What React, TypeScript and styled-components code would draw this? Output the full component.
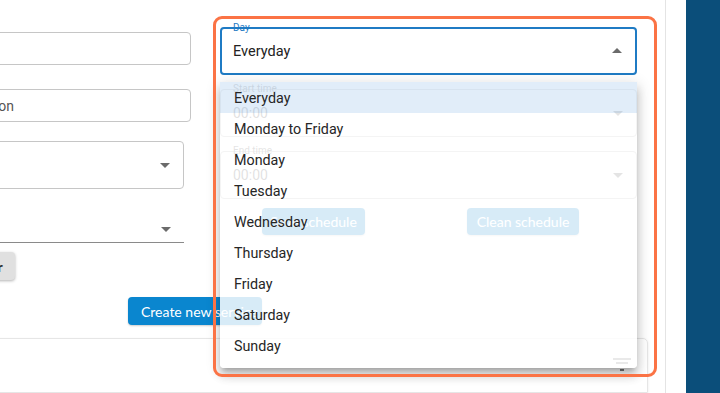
import React from "react";
import styled, { createGlobalStyle } from "styled-components";

const Global = createGlobalStyle`
  html, body { margin: 0; padding: 0; background: #ffffff; overflow: hidden; }
  body { font-family: Roboto, "Noto Sans", sans-serif; }
  * { box-sizing: border-box; }
`;

const Page = styled.div`
  position: relative;
  width: 720px;
  height: 393px;
  display: flex;
  gap: 20px;
  overflow: hidden;
`;

const Content = styled.main`
  width: 666px;
  flex: none;
  border-right: 1px solid #e4e4e4;
  display: flex;
  flex-direction: column;
`;

const Sidebar = styled.aside`
  flex: 1;
  background: #0b4e7a;
`;

const TopRow = styled.div`
  display: flex;
  align-items: flex-start;
  gap: 29px;
  height: 280px;
`;

const LeftColumn = styled.div`
  margin-left: -70px;
  width: 261px;
  flex: none;
  padding-top: 32px;
  display: flex;
  flex-direction: column;
  align-items: flex-start;
`;

const RightColumn = styled.div`
  width: 417px;
  flex: none;
  padding-top: 27px;
  display: flex;
  flex-direction: column;
`;

const TextBox = styled.div<{ $w: number; $h: number; $mb: number }>`
  width: ${(p) => p.$w}px;
  height: ${(p) => p.$h}px;
  margin-bottom: ${(p) => p.$mb}px;
  border: 1px solid #c6c6c6;
  border-radius: 4px;
  padding: 0 12px;
  display: flex;
  align-items: center;
  justify-content: space-between;
  font-size: 14px;
  color: #555;
  position: relative;
`;

const UnderlineSelect = styled.div<{ $w: number; $mb: number }>`
  width: ${(p) => p.$w}px;
  height: 28px;
  margin-bottom: ${(p) => p.$mb}px;
  border-bottom: 1px solid #8a8a8a;
  display: flex;
  align-items: center;
  justify-content: flex-end;
  padding-right: 6px;
`;

const Caret = styled.svg<{ $up?: boolean; $faint?: boolean }>`
  width: 24px;
  height: 24px;
  flex: none;
  fill: ${(p) => (p.$faint ? "#5a5a5a" : "#6b6b6b")};
  transform: ${(p) => (p.$up ? "rotate(180deg)" : "none")};
`;

const GreyButton = styled.button`
  margin-left: 28px;
  height: 28px;
  padding: 0 12px;
  border: none;
  border-radius: 4px;
  background: #e0e0e0;
  color: #2a2a2a;
  font-family: Lato, "Open Sans", sans-serif;
  font-weight: 700;
  font-size: 14px;
  box-shadow: 0 1px 3px rgba(0, 0, 0, 0.3);
`;

const BlueButton = styled.button<{ $w?: number }>`
  height: 27px;
  padding: 0 8px;
  ${(p) => (p.$w ? `width: ${p.$w}px;` : "")}
  border: none;
  border-radius: 4px;
  background: #0a86cf;
  color: #ffffff;
  font-family: Lato, "Open Sans", sans-serif;
  font-size: 14px;
  white-space: nowrap;
  overflow: hidden;
  box-shadow: 0 1px 2px rgba(0, 0, 0, 0.2);
`;

const CreateButton = styled(BlueButton)`
  height: 28px;
  padding: 0 0 0 13px;
  text-align: left;
`;

const OutlinedField = styled.div<{ $focused?: boolean; $mb: number }>`
  position: relative;
  height: 48px;
  margin-bottom: ${(p) => p.$mb}px;
  border: ${(p) => (p.$focused ? "2px solid #1f7bc4" : "1px solid #b8b8b8")};
  border-radius: 4px;
  padding: 0 6px 0 ${(p) => (p.$focused ? 11 : 12)}px;
  display: flex;
  align-items: center;
  justify-content: space-between;
`;

const FloatLabel = styled.span<{ $focused?: boolean }>`
  position: absolute;
  left: ${(p) => (p.$focused ? 11 : 12)}px;
  top: -7px;
  font-size: 10px;
  line-height: 12px;
  color: ${(p) => (p.$focused ? "#1f7bc4" : "#555")};
`;

const FieldValue = styled.span<{ $muted?: boolean }>`
  font-size: ${(p) => (p.$muted ? 14 : 14.5)}px;
  color: ${(p) => (p.$muted ? "#4a4a4a" : "#222")};
`;

const ButtonRow = styled.div`
  display: flex;
  gap: 102px;
  padding-left: 42px;
`;

const CreateRow = styled.div`
  margin-top: 17px;
  padding-left: 128px;
  display: flex;
`;

const BottomCard = styled.section`
  margin-top: 13px;
  margin-left: -20px;
  width: 668px;
  height: 120px;
  border: 1px solid #e6e6e6;
  border-radius: 0 5px 0 0;
  box-shadow: 0 1px 3px rgba(0, 0, 0, 0.08);
  display: flex;
  justify-content: flex-end;
  padding: 18px 15px 0 0;
`;

const FilterIcon = styled.svg`
  width: 20px;
  height: 16px;
  stroke: #555;
  stroke-width: 1.6;
`;

const Menu = styled.ul`
  position: absolute;
  left: 220px;
  top: 82px;
  width: 417px;
  height: 286px;
  margin: 0;
  padding: 0 0 7px;
  list-style: none;
  background: rgba(255, 255, 255, 0.84);
  border-radius: 0 0 4px 4px;
  box-shadow: 0 5px 5px -3px rgba(0, 0, 0, 0.2), 0 8px 10px 1px rgba(0, 0, 0, 0.14),
    0 3px 14px 2px rgba(0, 0, 0, 0.12);
`;

const MenuItem = styled.li<{ $selected?: boolean }>`
  height: 31px;
  padding-left: 14px;
  display: flex;
  align-items: center;
  font-size: 14.3px;
  color: #262626;
  background: ${(p) => (p.$selected ? "rgba(25, 118, 210, 0.13)" : "transparent")};
`;

const Highlight = styled.div`
  position: absolute;
  left: 213px;
  top: 16px;
  width: 444px;
  height: 361px;
  border: 3px solid #fb7345;
  border-radius: 9px;
  pointer-events: none;
`;

const ArrowDrop = ({ up, faint }: { up?: boolean; faint?: boolean }) => (
  <Caret viewBox="0 0 24 24" $up={up} $faint={faint}>
    <path d="M7 10l5 5 5-5z" />
  </Caret>
);

const days = [
  "Everyday",
  "Monday to Friday",
  "Monday",
  "Tuesday",
  "Wednesday",
  "Thursday",
  "Friday",
  "Saturday",
  "Sunday",
];

export default function App() {
  return (
    <>
      <Global />
      <Page>
        <Content>
          <TopRow>
            <LeftColumn>
              <TextBox $w={261} $h={33} $mb={24} />
              <TextBox $w={261} $h={33} $mb={19}>
                Description
              </TextBox>
              <TextBox $w={254} $h={48} $mb={26} style={{ paddingRight: 6 }}>
                <span />
                <ArrowDrop />
              </TextBox>
              <UnderlineSelect $w={254} $mb={9}>
                <ArrowDrop />
              </UnderlineSelect>
              <GreyButton>Filter</GreyButton>
            </LeftColumn>
            <RightColumn>
              <OutlinedField $focused $mb={14}>
                <FloatLabel $focused>Day</FloatLabel>
                <FieldValue>Everyday</FieldValue>
                <ArrowDrop up />
              </OutlinedField>
              <OutlinedField $mb={14}>
                <FloatLabel>Start time</FloatLabel>
                <FieldValue $muted>00:00</FieldValue>
                <ArrowDrop faint />
              </OutlinedField>
              <OutlinedField $mb={9}>
                <FloatLabel>End time</FloatLabel>
                <FieldValue $muted>00:00</FieldValue>
                <ArrowDrop faint />
              </OutlinedField>
              <ButtonRow>
                <BlueButton $w={103}>Save schedule</BlueButton>
                <BlueButton $w={112}>Clean schedule</BlueButton>
              </ButtonRow>
            </RightColumn>
          </TopRow>
          <CreateRow>
            <CreateButton $w={134}>Create new service</CreateButton>
          </CreateRow>
          <BottomCard>
            <FilterIcon viewBox="0 0 20 16">
              <line x1="1" y1="2" x2="19" y2="2" />
              <line x1="4" y1="6" x2="16" y2="6" />
              <line x1="8" y1="13" x2="12" y2="13" />
            </FilterIcon>
          </BottomCard>
        </Content>
        <Sidebar />
        <Menu>
          {days.map((d, i) => (
            <MenuItem key={d} $selected={i === 0}>
              {d}
            </MenuItem>
          ))}
        </Menu>
        <Highlight />
      </Page>
    </>
  );
}
